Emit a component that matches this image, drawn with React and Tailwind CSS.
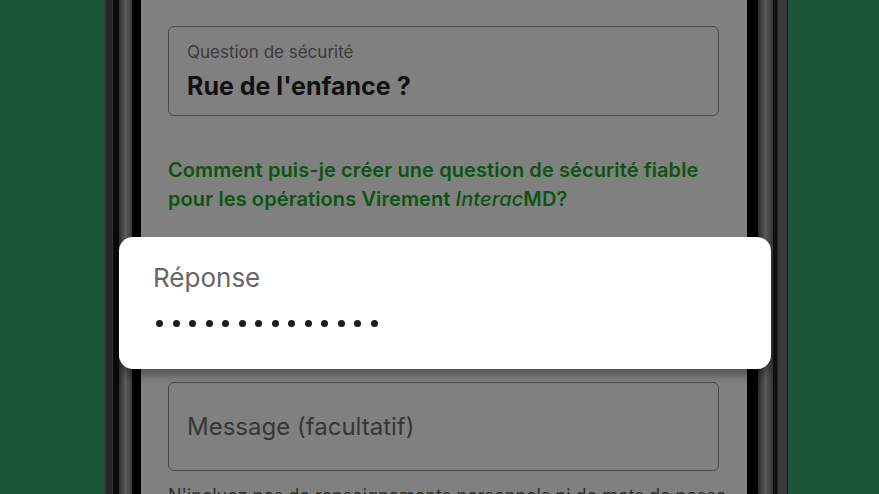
import React from 'react';

const font = { fontFamily: 'Inter, "Noto Sans", sans-serif' };

const Dots = ({ count }) => (
    <div className="flex items-center gap-[9.5px]">
        {Array.from({ length: count }).map((_, i) => (
            <div key={i} className="w-[7px] h-[7px] rounded-full bg-[#1c1c1c]" />
        ))}
    </div>
);

const App = () => {
    return (
        <div className="w-[879px] h-[494px] bg-[#1b5539] relative overflow-hidden flex" style={font}>
            {/* Left green margin */}
            <div className="w-[104px] shrink-0" />

            {/* Left bezel */}
            <div className="flex h-full shrink-0">
                <div className="w-[2px] bg-[#3a3a3a]" />
                <div className="w-[7px] bg-[#262626] border-r border-[#333]" />
                <div className="w-[6px] bg-[#0a0a0a]" />
                <div className="w-[13px] bg-gradient-to-r from-[#2e2e2e] via-[#5c5c5c] to-[#3a3a3a]" />
                <div className="w-[9px] bg-black" />
            </div>

            {/* Screen (dimmed) */}
            <div className="w-[606px] shrink-0 h-full bg-[#808080] pl-[27px] pt-[26px] flex flex-col overflow-hidden">
                <div className="shrink-0 w-[551px] h-[90px] border-[1.5px] border-[#4a4a4a] rounded-[6px] px-[18px] pt-[14px]">
                    <div className="text-[17px] leading-[22px] text-[#3b3b3b]">Question de sécurité</div>
                    <div className="text-[25px] leading-[34px] font-bold text-[#111] mt-[6px]">Rue de l'enfance ?</div>
                </div>

                <p className="shrink-0 mt-[40px] w-[551px] text-[20px] leading-[29px] font-semibold text-[#0b550f] tracking-[0.1px]">
                    Comment puis-je créer une question de sécurité fiable pour les opérations Virement <i className="font-medium">Interac</i>MD?
                </p>

                <div className="shrink-0 mt-[168px] w-[551px] h-[89px] border-[1.5px] border-[#4a4a4a] rounded-[6px] px-[18px] flex items-center">
                    <span className="text-[24px] text-[#363636]">Message (facultatif)</span>
                </div>

                <p className="shrink-0 mt-[12px] text-[18px] leading-[26px] text-[#2f2f2f] whitespace-nowrap">
                    N'incluez pas de renseignements personnels ni de mots de passe.
                </p>
            </div>

            {/* Right bezel */}
            <div className="flex h-full shrink-0">
                <div className="w-[11px] bg-black" />
                <div className="w-[15px] bg-gradient-to-r from-[#2a2a2a] via-[#5a5a5a] to-[#333]" />
                <div className="w-[4px] bg-[#111]" />
                <div className="w-[10px] bg-[#3a3a3a] border-l border-[#222]" />
                <div className="w-[1px] bg-[#1a1a1a]" />
            </div>

            {/* Highlighted answer field, raised over the dimmed screen */}
            <div className="absolute left-[119px] top-[237px] w-[652px] h-[132px] bg-white rounded-[14px] shadow-[0_6px_10px_rgba(0,0,0,0.35)] pl-[34px] pt-[24px]">
                <div className="text-[26px] leading-[34px] text-[#666]">Réponse</div>
                <div className="mt-[25px] pl-[3px]">
                    <Dots count={14} />
                </div>
            </div>
        </div>
    );
};

export default App;
